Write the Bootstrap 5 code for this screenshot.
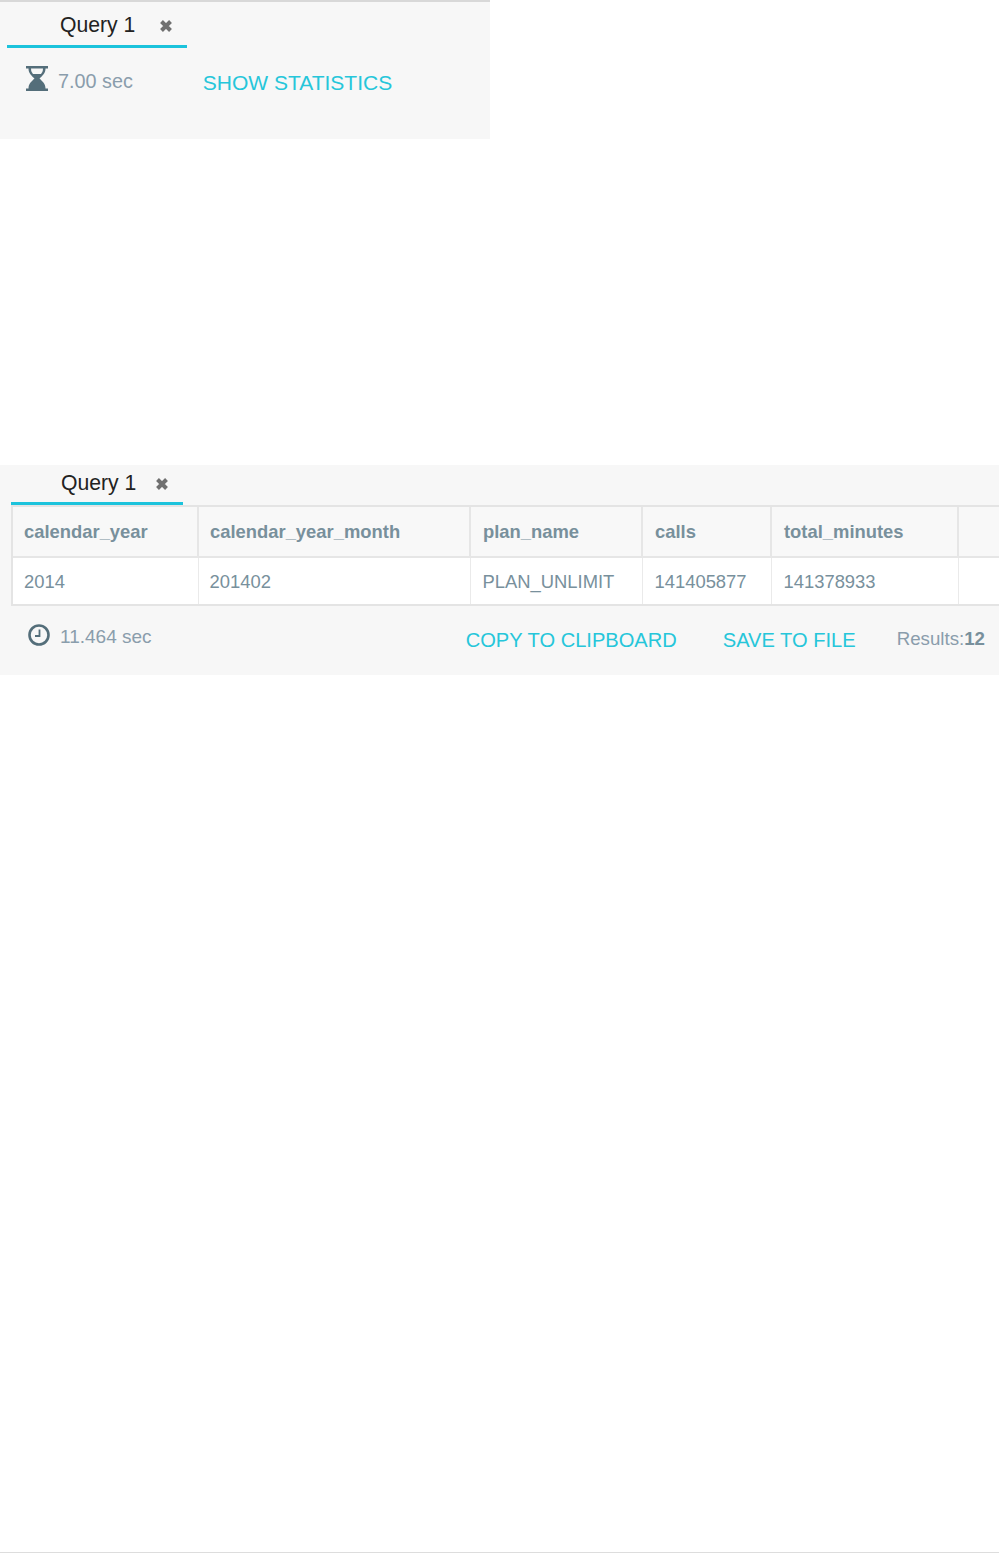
<!DOCTYPE html>
<html lang="en">
<head>
<meta charset="utf-8">
<title>Query results</title>
<link href="https://cdn.jsdelivr.net/npm/bootstrap@5.3.0/dist/css/bootstrap.min.css" rel="stylesheet">
<style>
html,body{height:100%;}
body{font-family:"Liberation Sans",Arial,sans-serif;background:#fff;color:#78909c;overflow:hidden;}
.page-wrap{height:1553px;border-bottom:1px solid #ddd;}
.pane{background:#f7f7f7;}
.pane-top{width:490px;height:139px;border-top:2px solid #d8d8d8;}
.pane-bottom{margin-top:326px;height:210px;}
.tab-strip{height:46px;padding-left:7px;}
.pane-bottom .tab-strip{height:40px;padding-left:11px;}
.qtab{width:180px;height:100%;border-bottom:3px solid #1cc3dc;display:flex;align-items:flex-start;color:#222;font-size:21.2px;line-height:24px;padding-top:11px;padding-left:53px;}
.pane-bottom .qtab{width:172px;padding-left:50px;padding-top:6px;}
.qclose{margin-left:24px;margin-top:6px;display:block;}
.pane-bottom .qclose{margin-left:19px;margin-top:6px;}
.stat-row{padding:23px 0 0 25px;}
.stat-icon{margin-top:-6px;}
.stat-time{font-size:19.800px;line-height:24px;color:#8a9dac;margin-left:9px;margin-top:-2px;}
.stat-link{color:#26c6da;font-size:21px;line-height:26px;text-decoration:none;}
.stat-row .stat-link{margin-left:70px;margin-top:-1px;}
.foot-row .stat-link{font-size:20.100px;margin-top:3px;}
.foot-copy{margin-left:auto;}
.foot-save{margin-left:46px;}
.grid-box{margin-left:11px;border:solid #e4e4e4;border-width:2px 0 2px 2px;}
.result-grid{table-layout:fixed;width:988px;margin:0;--bs-table-bg:transparent;color:#78909c;border-collapse:collapse;}
.result-grid th,.result-grid td{padding:0 0 0 11px;vertical-align:middle;font-size:18.400px;color:#78909c;box-shadow:none;}
.result-grid th:nth-child(n+3),.result-grid td:nth-child(n+3){padding-left:12px;}
.result-grid th{height:50px;background:#f8f8f8;font-weight:700;border:0;border-right:2px solid #e6e6e6;border-bottom:2px solid #e6e6e6;}
.result-grid td{height:47px;padding-top:1px;background:#fff;font-weight:400;border:0;border-right:1px solid #eaeaea;}
.result-grid th:last-child,.result-grid td:last-child{border-right:0;}
.foot-row{height:70px;padding:18px 14px 0 28px;}
.foot-time{font-size:19px;color:#8a9dac;line-height:24px;margin-left:10px;margin-top:1px;}
.results-count{font-size:18.700px;line-height:24px;color:#8a9dac;margin-left:41px;margin-top:3px;}
.results-count b{color:#78909c;}
</style>
</head>
<body>
<div class="page-wrap">
  <section class="pane pane-top">
    <div class="tab-strip">
      <div class="qtab">Query 1
        <svg class="qclose" width="14" height="14" viewBox="0 0 14 14"><path d="M2.500 2.500L11.500 11.500M11.500 2.500L2.500 11.500" stroke="#707070" stroke-width="4"/></svg>
      </div>
    </div>
    <div class="stat-row d-flex align-items-start">
      <svg class="stat-icon" width="24" height="27" viewBox="0 0 24 27"><path d="M1 1h22v2.500h-2.500c0 5-3 7-6 10 3 3 6 5 6 10H23V26H1v-2.500h2.500c0-5 3-7 6-10-3-3-6-5-6-10H1z" fill="#546e7a"/><path d="M6 3.500h12c0 2.500-.8 4-2 5.500H8C6.800 7.500 6 6 6 3.500z" fill="#f7f7f7"/></svg>
      <span class="stat-time">7.00 sec</span>
      <a class="stat-link" href="#">SHOW STATISTICS</a>
    </div>
  </section>
  <section class="pane pane-bottom">
    <div class="tab-strip">
      <div class="qtab">Query 1
        <svg class="qclose" width="14" height="14" viewBox="0 0 14 14"><path d="M2.500 2.500L11.500 11.500M11.500 2.500L2.500 11.500" stroke="#707070" stroke-width="4"/></svg>
      </div>
    </div>
    <div class="grid-box">
      <table class="table result-grid">
        <colgroup><col style="width:185px"><col style="width:272px"><col style="width:172px"><col style="width:129px"><col style="width:187px"><col></colgroup>
        <thead><tr><th>calendar_year</th><th>calendar_year_month</th><th>plan_name</th><th>calls</th><th>total_minutes</th><th></th></tr></thead>
        <tbody><tr><td>2014</td><td>201402</td><td>PLAN_UNLIMIT</td><td>141405877</td><td>141378933</td><td></td></tr></tbody>
      </table>
    </div>
    <div class="foot-row d-flex align-items-start">
      <svg width="22" height="22" viewBox="0 0 22 22"><circle cx="11" cy="11" r="9.500" fill="none" stroke="#546e7a" stroke-width="2.600"/><path d="M11.500 5.500V12H7" fill="none" stroke="#546e7a" stroke-width="1.800"/></svg>
      <span class="foot-time">11.464 sec</span>
      <a class="stat-link foot-copy" href="#">COPY TO CLIPBOARD</a>
      <a class="stat-link foot-save" href="#">SAVE TO FILE</a>
      <span class="results-count">Results:<b>12</b></span>
    </div>
  </section>
</div>
<script src="https://cdn.jsdelivr.net/npm/bootstrap@5.3.0/dist/js/bootstrap.bundle.min.js"></script>
</body>
</html>
